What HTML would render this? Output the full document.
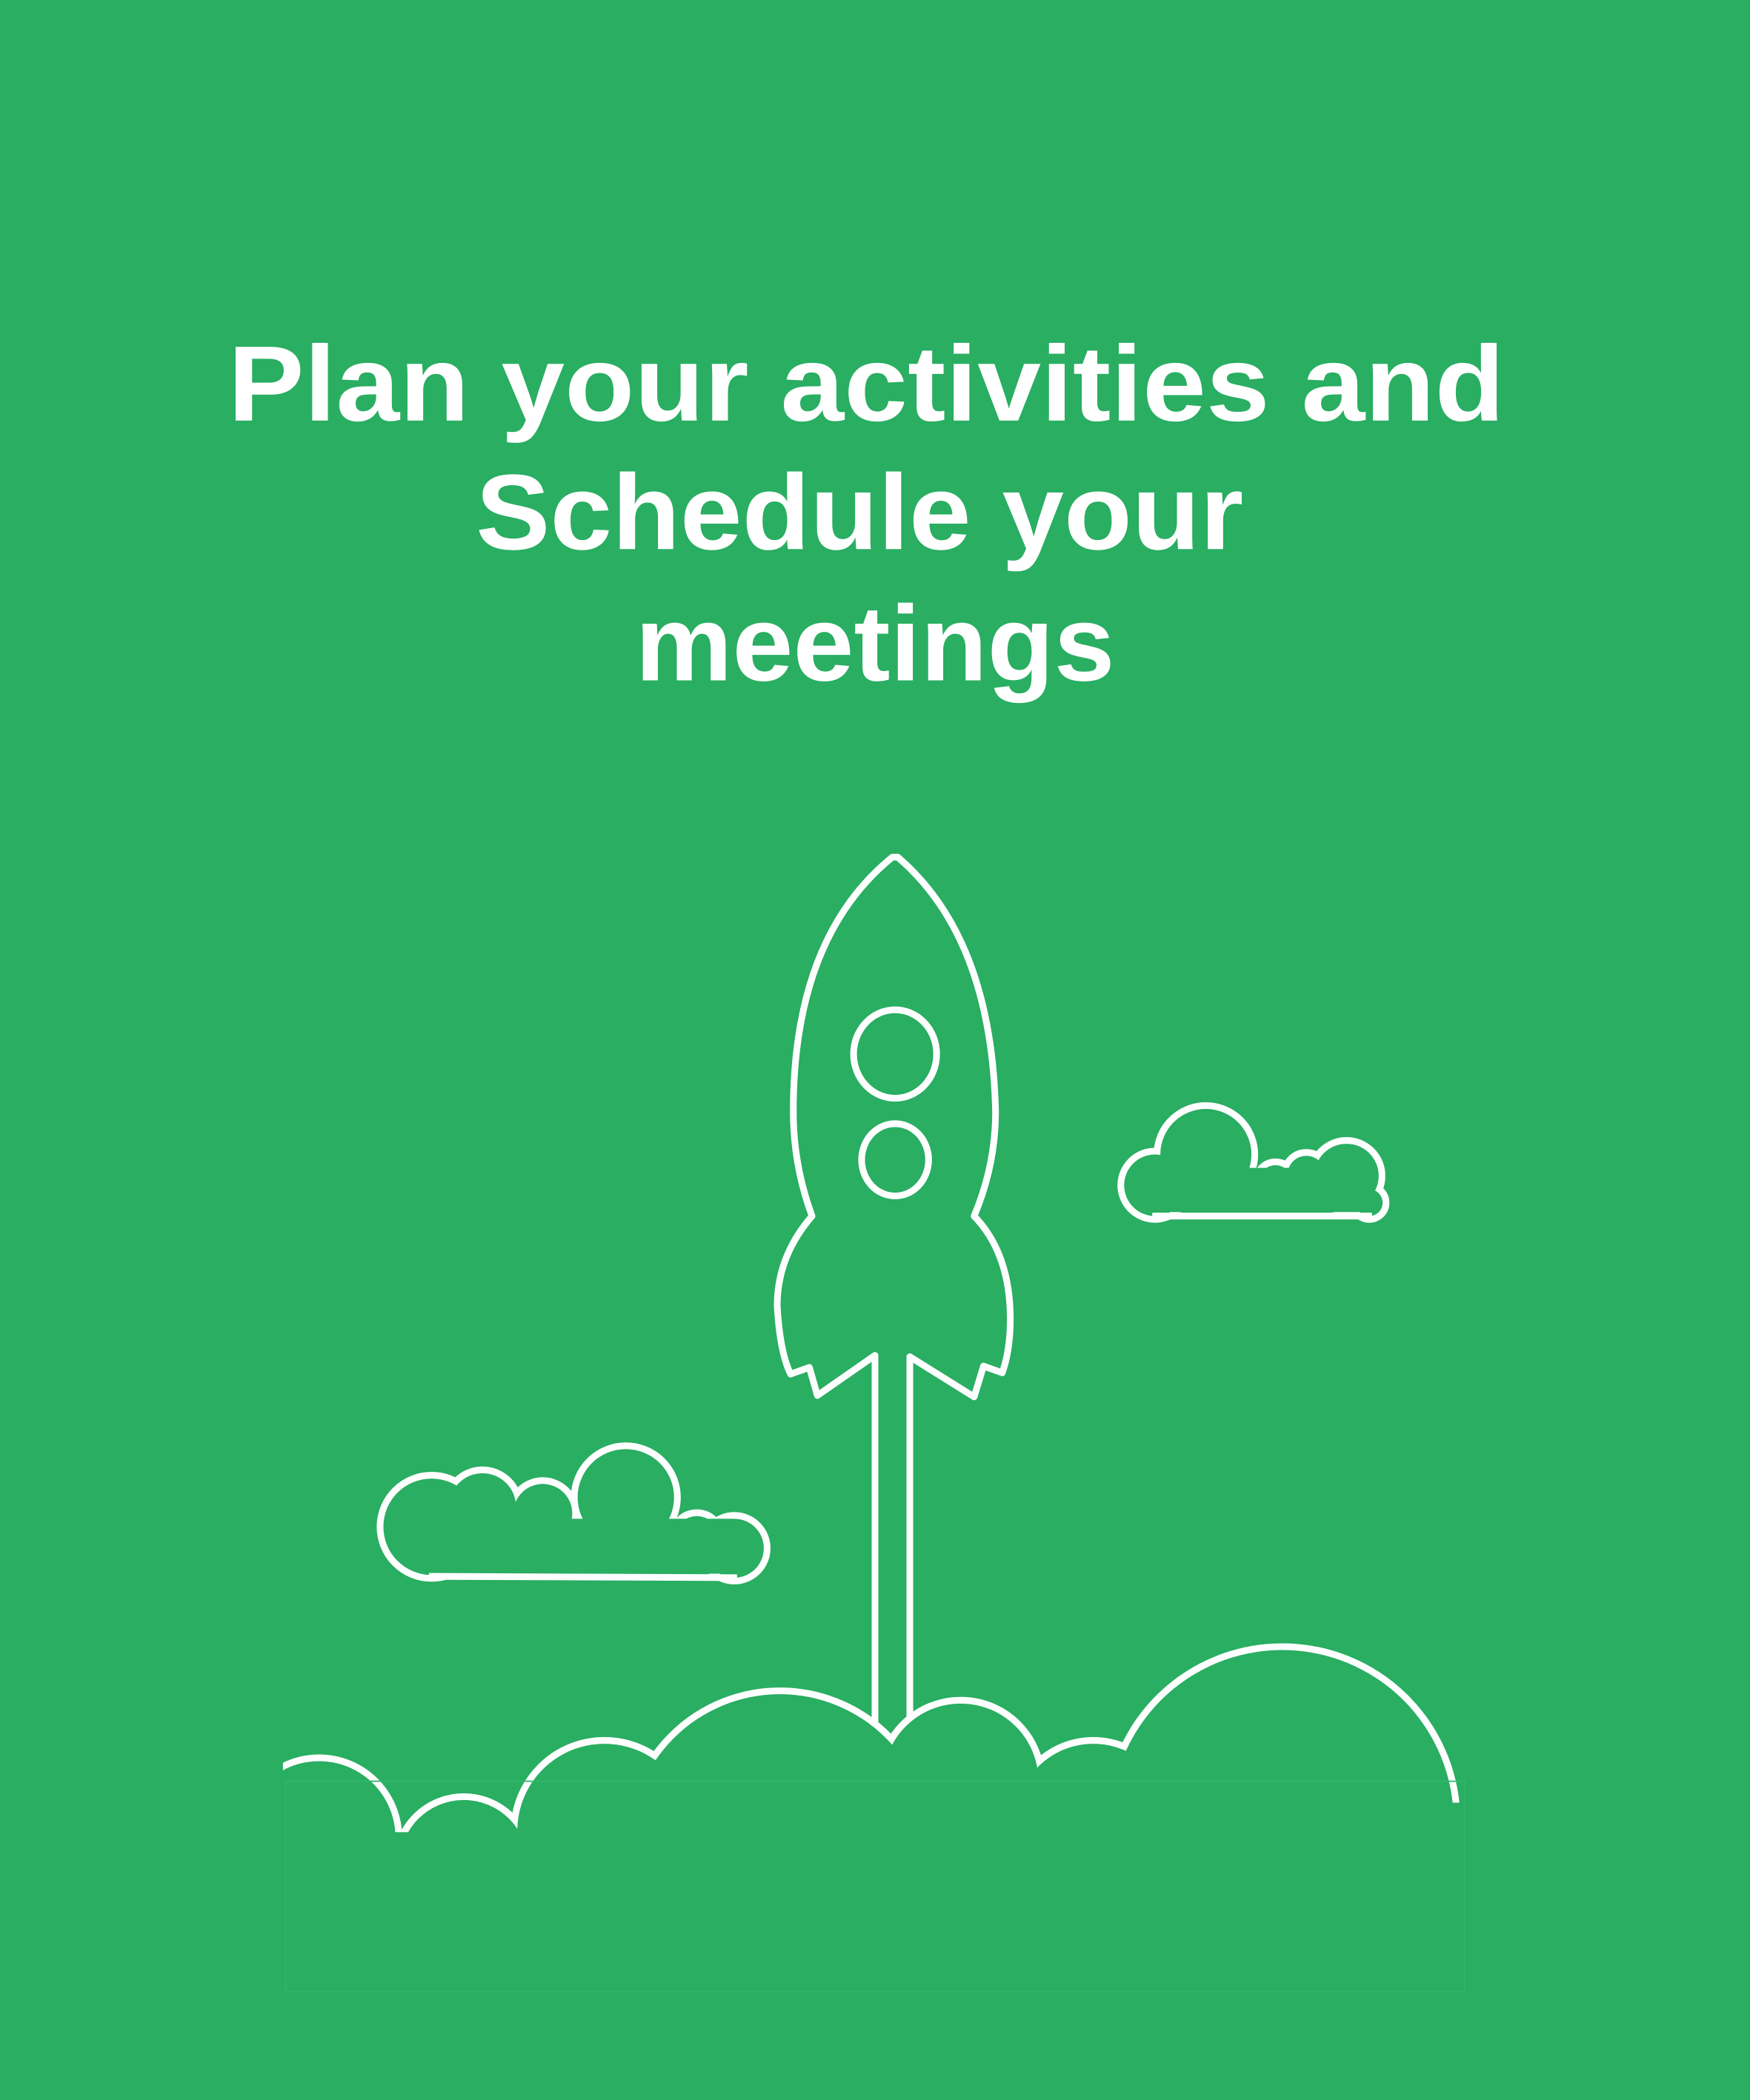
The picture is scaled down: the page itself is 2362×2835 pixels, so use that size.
<!DOCTYPE html>
<html><head><meta charset="utf-8"><style>
html,body{margin:0;padding:0;background:#29ae62;}
svg{display:block;}
</style></head><body>
<svg width="2362" height="2835" viewBox="0 0 1306 1568" xmlns="http://www.w3.org/2000/svg">
<rect width="1306" height="1568" fill="#29ae62"/>
<g fill="#fff" font-family="'Liberation Sans', sans-serif" font-weight="bold" font-size="80">
<text x="170" y="314" textLength="953" lengthAdjust="spacingAndGlyphs">Plan your activities and</text>
<text x="355" y="410" textLength="573" lengthAdjust="spacingAndGlyphs">Schedule your</text>
<text x="474" y="508" textLength="358" lengthAdjust="spacingAndGlyphs">meetings</text>
</g>
<g fill="none" stroke="#fff" stroke-width="5" stroke-linejoin="round">
<path d="M653,1290 L653,1012 L610,1042 L604,1021 L590,1026 Q582,1010 580,975 Q580,938 606,908 Q592,870 592,830 Q592,700 666,640 L670,640 Q740,700 743,830 Q743,870 727,908 Q754,936 754,985 Q754,1008 748,1025 L734,1020 L727,1043 L679,1013 L679,1290"/>
<ellipse cx="668" cy="787" rx="31" ry="33"/>
<ellipse cx="668" cy="866" rx="25" ry="27"/>
</g>
<g fill="none" stroke="#fff" stroke-width="10">
<circle cx="238" cy="1372" r="57"/><circle cx="346" cy="1392" r="48"/><circle cx="451" cy="1367" r="65"/>
<circle cx="582" cy="1377" r="112"/><circle cx="717" cy="1330" r="58"/><circle cx="816" cy="1360" r="58"/>
<circle cx="957" cy="1360" r="128"/>
<circle cx="862" cy="885" r="23"/><circle cx="900" cy="862" r="34"/><circle cx="952" cy="882" r="12"/>
<circle cx="975" cy="877" r="14"/><circle cx="1005" cy="878" r="24"/><circle cx="1022" cy="898" r="10"/>
<circle cx="322" cy="1140" r="36"/><circle cx="360" cy="1125" r="25"/><circle cx="405" cy="1130" r="22"/>
<circle cx="467" cy="1118" r="36"/><circle cx="520" cy="1148" r="16"/><circle cx="548" cy="1156" r="22"/>
</g>
<g fill="#29ae62">
<circle cx="238" cy="1372" r="57"/><circle cx="346" cy="1392" r="48"/><circle cx="451" cy="1367" r="65"/>
<circle cx="582" cy="1377" r="112"/><circle cx="717" cy="1330" r="58"/><circle cx="816" cy="1360" r="58"/>
<circle cx="957" cy="1360" r="128"/>
<rect x="170" y="1368" width="980" height="200"/>
<circle cx="862" cy="885" r="23"/><circle cx="900" cy="862" r="34"/><circle cx="952" cy="882" r="12"/>
<circle cx="975" cy="877" r="14"/><circle cx="1005" cy="878" r="24"/><circle cx="1022" cy="898" r="10"/>
<rect x="862" y="872" width="160" height="33"/>
<circle cx="322" cy="1140" r="36"/><circle cx="360" cy="1125" r="25"/><circle cx="405" cy="1130" r="22"/>
<circle cx="467" cy="1118" r="36"/><circle cx="520" cy="1148" r="16"/><circle cx="548" cy="1156" r="22"/>
<rect x="322" y="1134" width="226" height="41"/>
</g>
<g stroke="#fff" stroke-width="5">
<line x1="860" y1="908" x2="1024" y2="908"/>
<line x1="320" y1="1177" x2="550" y2="1178"/>
</g>
<rect x="0" y="1200" width="211" height="368" fill="#29ae62"/>
<rect x="1095" y="1200" width="211" height="368" fill="#29ae62"/>
<rect x="1075" y="1346" width="22" height="26" fill="#29ae62"/>
<rect x="213" y="1330" width="880" height="157" fill="none" stroke="#34b56b" stroke-width="1"/>
</svg>
</body></html>
